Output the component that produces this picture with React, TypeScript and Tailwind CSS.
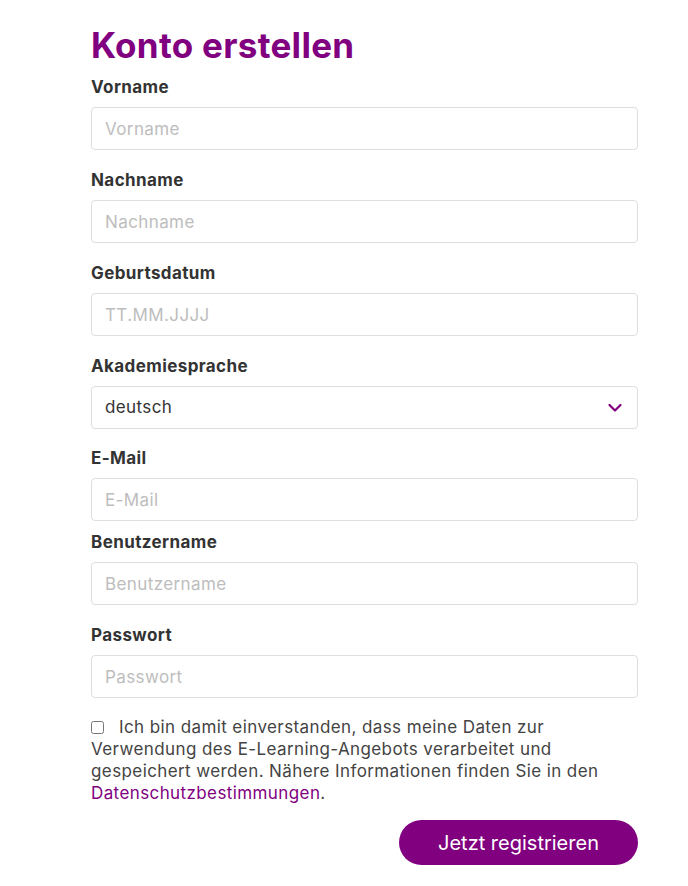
import React from "react";

const fields = [
  { id: "vorname", label: "Vorname", placeholder: "Vorname", gap: "mb-[18px]" },
  { id: "nachname", label: "Nachname", placeholder: "Nachname", gap: "mb-[18px]" },
  { id: "geburtsdatum", label: "Geburtsdatum", placeholder: "TT.MM.JJJJ", gap: "mb-[18px]" },
];

const fieldsAfter = [
  { id: "email", label: "E-Mail", placeholder: "E-Mail", gap: "mb-[9px]" },
  { id: "benutzername", label: "Benutzername", placeholder: "Benutzername", gap: "mb-[18px]" },
  { id: "passwort", label: "Passwort", placeholder: "Passwort", gap: "mb-[18px]", type: "password" },
];

const Label = ({ htmlFor, children }: { htmlFor: string; children: React.ReactNode }) => (
  <label htmlFor={htmlFor} className="block text-[17px] leading-[24px] font-bold tracking-[0.4px] text-[#333] mb-2">
    {children}
  </label>
);

const TextField = ({ id, label, placeholder, gap, type = "text" }: { id: string; label: string; placeholder: string; gap: string; type?: string }) => (
  <div className={gap}>
    <Label htmlFor={id}>{label}</Label>
    <input
      id={id}
      type={type}
      placeholder={placeholder}
      className="block w-full h-[43px] px-[13px] rounded-[4px] border border-[#dedede] bg-white text-[17px] tracking-[0.4px] text-[#333] placeholder:text-[#bdbdbd] outline-none"
    />
  </div>
);

export default function App() {
  return (
    <div className="min-h-[886px] bg-white font-['Inter',sans-serif] text-[#333]">
      <form className="ml-[91px] w-[547px] pt-[25px]">
        <h1 className="text-[35px] leading-[40px] font-bold tracking-[0.3px] text-[#800080] mb-[10px]">Konto erstellen</h1>

        {fields.map((f) => (
          <TextField key={f.id} {...f} />
        ))}

        <div className="mb-[17px]">
          <Label htmlFor="sprache">Akademiesprache</Label>
          <div className="relative">
            <select
              id="sprache"
              defaultValue="deutsch"
              className="block w-full h-[43px] pl-[13px] pr-10 appearance-none rounded-[4px] border border-[#dedede] bg-white text-[17px] tracking-[0.4px] text-[#333] outline-none"
            >
              <option value="deutsch">deutsch</option>
              <option value="englisch">englisch</option>
            </select>
            <svg
              className="absolute right-[16px] top-1/2 -translate-y-1/2 pointer-events-none"
              width="14"
              height="9"
              viewBox="0 0 14 9"
              fill="none"
            >
              <path d="M1.5 1.5 L7 7 L12.5 1.5" stroke="#800080" strokeWidth="2.2" strokeLinecap="round" strokeLinejoin="round" />
            </svg>
          </div>
        </div>

        {fieldsAfter.map((f) => (
          <TextField key={f.id} {...f} />
        ))}

        <p className="text-[17px] leading-[22px] tracking-[0.4px] text-[#444] mb-4">
          <input type="checkbox" className="w-[13px] h-[13px] align-[-1px] mr-[15px] ml-0" />
          Ich bin damit einverstanden, dass meine Daten zur Verwendung des E-Learning-Angebots verarbeitet und
          gespeichert werden. Nähere Informationen finden Sie in den{" "}
          <a href="#" className="text-[#800080]">
            Datenschutzbestimmungen
          </a>
          .
        </p>

        <div className="flex justify-end">
          <button
            type="button"
            className="w-[239px] h-[45px] rounded-full bg-[#800080] text-white text-[20px]"
          >
            Jetzt registrieren
          </button>
        </div>
      </form>
    </div>
  );
}
